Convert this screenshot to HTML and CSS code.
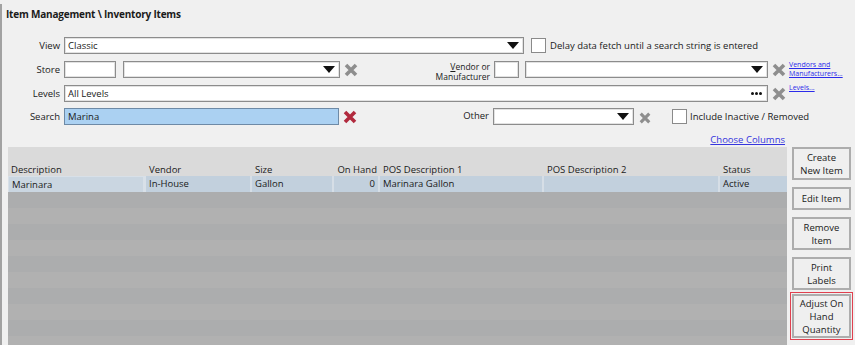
FILE: index.html
```html
<!DOCTYPE html>
<html lang="en">
<head>
  <meta charset="UTF-8" />
  <title>Item Management - Inventory Items</title>
  <link rel="stylesheet" href="styles.css">
</head>
<body>
  <div class="screen">
    <div class="title">Item Management \ Inventory Items</div>

    <div class="filters">
      <div class="row row-view">
        <span class="lbl">View</span>
        <div class="combo w-view"><span>Classic</span><i class="arrow"></i></div>
        <span class="check"></span>
        <span class="text">Delay data fetch until a search string is entered</span>
      </div>

      <div class="row row-store">
        <span class="lbl">Store</span>
        <div class="field w-store-code"></div>
        <div class="combo w-store"><i class="arrow"></i></div>
        <svg class="clear" viewBox="0 0 14 14"><path d="M2 2 L12 12 M12 2 L2 12" /></svg>
        <span class="lbl-two"><u>V</u>endor or<br>Manufacturer</span>
        <div class="field w-vendor-code"></div>
        <div class="combo w-vendor"><i class="arrow"></i></div>
        <svg class="clear" viewBox="0 0 14 14"><path d="M2 2 L12 12 M12 2 L2 12" /></svg>
        <a class="mini-link" href="#">Vendors and<br>Manufacturers...</a>
      </div>

      <div class="row row-levels">
        <span class="lbl">Levels</span>
        <div class="field w-levels"><span>All Levels</span><b class="dots"><i></i><i></i><i></i></b></div>
        <svg class="clear" viewBox="0 0 14 14"><path d="M2 2 L12 12 M12 2 L2 12" /></svg>
        <a class="mini-link" href="#">Levels...</a>
      </div>

      <div class="row row-search">
        <span class="lbl">Search</span>
        <div class="field search w-search"><span>Marina</span></div>
        <svg class="clear red" viewBox="0 0 14 14"><path d="M2 2 L12 12 M12 2 L2 12" /></svg>
        <span class="lbl-other">Other</span>
        <div class="combo w-other"><i class="arrow"></i></div>
        <svg class="clear small" viewBox="0 0 14 14"><path d="M2 2 L12 12 M12 2 L2 12" /></svg>
        <span class="check check-inactive"></span>
        <span class="text">Include Inactive / Removed</span>
      </div>
    </div>

    <div class="columns-link"><a href="#">Choose Columns</a></div>

    <div class="main">
      <div class="grid">
        <div class="grid-head">
          <span>Description</span>
          <span>Vendor</span>
          <span>Size</span>
          <span class="num">On Hand</span>
          <span>POS Description 1</span>
          <span>POS Description 2</span>
          <span>Status</span>
        </div>
        <div class="grid-row">
          <span class="current">Marinara</span>
          <span>In-House</span>
          <span>Gallon</span>
          <span class="num">0</span>
          <span>Marinara Gallon</span>
          <span></span>
          <span>Active</span>
        </div>
        <div class="grid-empty"></div>
      </div>

      <div class="actions">
        <button class="btn tall">Create<br>New Item</button>
        <button class="btn">Edit Item</button>
        <button class="btn tall">Remove<br>Item</button>
        <button class="btn tall">Print<br>Labels</button>
        <button class="btn taller marked">Adjust On<br>Hand<br>Quantity</button>
      </div>
    </div>
  </div>
</body>
</html>
```

FILE: styles.css
```css
body {
  margin: 0;
  background: #f0f0f0;
  font-family: "Open Sans", "Noto Sans", sans-serif;
  font-size: 9.5px;
  color: #1a1a1a;
  width: 855px;
  height: 345px;
  overflow: hidden;
}

.screen {
  margin-top: 4px;
  height: 341px;
  border-left: 2px solid #a2a2a2;
}

.title {
  padding: 4px 4px 0;
  height: 13px;
  line-height: 13px;
  font-weight: bold;
  font-size: 10px;
  letter-spacing: -0.2px;
}

/* filter rows */
.filters {
  margin-top: 16px;
}

.row {
  display: flex;
  align-items: center;
  height: 17px;
  margin-bottom: 7px;
}

.row-levels {
  margin-bottom: 6px;
}

.lbl {
  width: 58px;
  text-align: right;
  margin-right: 4px;
}

.field,
.combo {
  box-sizing: border-box;
  height: 17px;
  background: #fff;
  border: 1px solid #8c8c8c;
  box-shadow: inset 0 0 0 1px #e2e2e2;
  display: flex;
  align-items: center;
  padding: 0 3px;
}

.combo .arrow {
  margin-left: auto;
  width: 0;
  height: 0;
  border-left: 6px solid transparent;
  border-right: 6px solid transparent;
  border-top: 7px solid #111;
  margin-right: 1px;
}

.w-view { width: 460px; }
.w-store-code { width: 52px; }
.w-store { width: 217px; margin-left: 7px; }
.w-vendor-code { width: 25px; }
.w-vendor { width: 243px; margin-left: 6px; }
.w-levels { width: 704px; }
.w-search { width: 275px; }
.w-other { width: 141px; }

.field.search {
  background: #abd1f2;
  border-color: #6e8aa6;
  box-shadow: none;
}

.dots {
  margin-left: auto;
  display: flex;
  gap: 1px;
  margin-right: 2px;
}

.dots i {
  width: 3px;
  height: 3px;
  border-radius: 50%;
  background: #111;
}

.check {
  box-sizing: border-box;
  width: 15px;
  height: 15px;
  background: #fff;
  border: 1px solid #8a8a8a;
  margin-left: 7px;
  margin-right: 4px;
}

.check-inactive {
  margin-left: 21px;
  margin-right: 3px;
}

.clear {
  width: 14px;
  height: 14px;
  margin-left: 4px;
  flex-shrink: 0;
}

.clear path {
  stroke: #8e8e8e;
  stroke-width: 3.6;
  fill: none;
}

.clear.red path {
  stroke: #b12a3e;
}

.clear.small {
  width: 12px;
  height: 12px;
  margin-left: 5px;
  margin-top: 3px;
}

.lbl-two {
  width: 132px;
  text-align: right;
  font-size: 8.5px;
  line-height: 10px;
  margin-right: 4px;
  align-self: flex-start;
  margin-top: 1px;
}

.lbl-other {
  width: 132px;
  text-align: right;
  margin-right: 4px;
  margin-top: -3px;
}

.mini-link {
  margin-left: 3px;
  font-size: 7px;
  line-height: 9px;
  color: #2b2bea;
  align-self: flex-start;
  margin-top: -1px;
}

.row-levels .mini-link {
  margin-top: -2px;
}

.columns-link {
  width: 783px;
  text-align: right;
  margin-top: 2px;
  height: 15px;
  line-height: 15px;
}

.columns-link a {
  color: #3535dd;
}

/* grid and buttons */
.main {
  display: flex;
  margin-left: 6px;
  gap: 5px;
}

.grid {
  width: 779px;
  height: 198px;
  background: #dadada;
  display: flex;
  flex-direction: column;
}

.grid-head,
.grid-row {
  display: grid;
  grid-template-columns: 138px 106px 82px 46px 164px 176px 67px;
}

.grid-head {
  height: 29px;
  align-items: end;
  padding-bottom: 0;
  box-sizing: border-box;
}

.grid-head span,
.grid-row span {
  padding: 0 3px;
  white-space: nowrap;
}

.grid-row {
  height: 16px;
  line-height: 15px;
  background: #c2d0dd;
}

.grid-row span {
  border-right: 2px solid #d6dee6;
}

.grid-row span:last-child {
  border-right: 0;
}

.grid-row .current {
  background: #cad6e1;
  border: 1px solid #d8e0e8;
  border-right-width: 3px;
}

.num {
  text-align: right;
}

.grid-empty {
  flex: 1;
  background: repeating-linear-gradient(#acadae 0 16px, #b1b1b1 16px 32px);
}

.actions {
  display: flex;
  flex-direction: column;
  width: 59px;
}

.btn {
  box-sizing: border-box;
  width: 59px;
  height: 23px;
  margin-bottom: 7px;
  background: #efefef;
  border: 2px solid #adadad;
  font-family: inherit;
  font-size: 9.5px;
  line-height: 13px;
  color: #1a1a1a;
  padding: 0;
}

.btn.tall {
  height: 33px;
}

.btn.taller {
  height: 44px;
  margin-top: -3px;
}

.btn.marked {
  outline: 1.5px solid #e0404f;
  outline-offset: 1px;
}
```
